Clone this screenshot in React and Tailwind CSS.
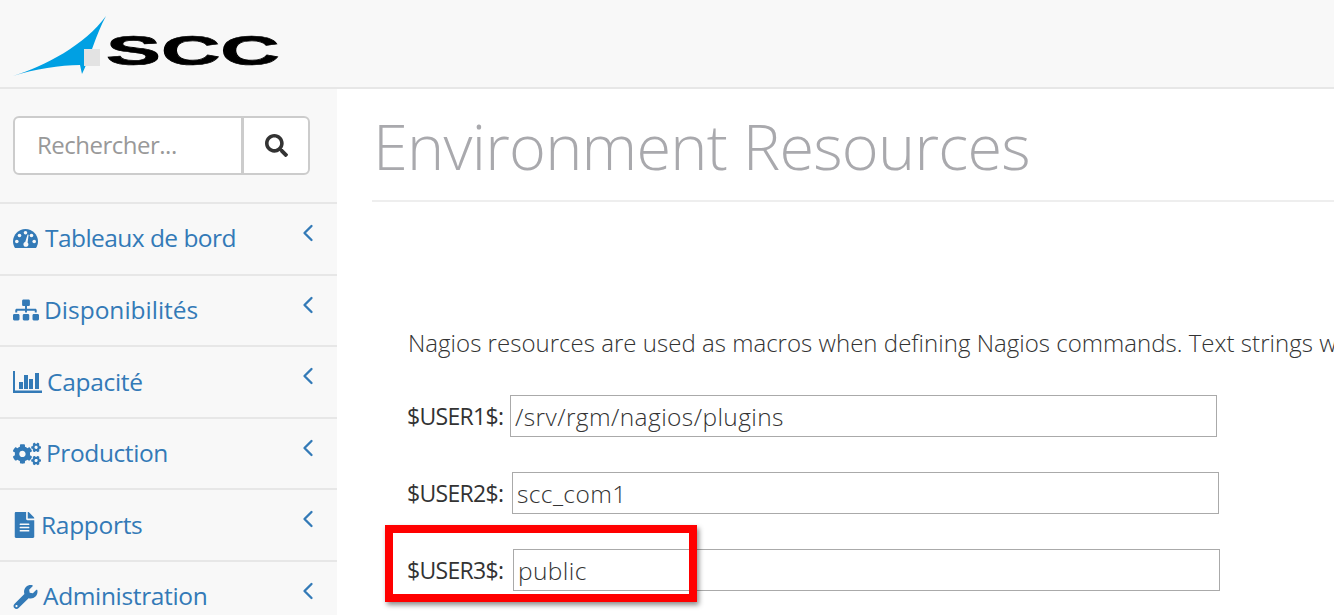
import React from 'react';
import { FaSitemap, FaCogs, FaFileAlt, FaWrench, FaSearch } from 'react-icons/fa';
import { ChevronLeft } from 'lucide-react';

const font = "font-['Open_Sans',sans-serif]";

const DashboardIcon = ({ className }) => (
    <svg viewBox="0 0 25 19" className={className}>
        <path d="M2 19 C0.7 17 0 14.8 0 12.5 C0 5.6 5.6 0 12.5 0 C19.4 0 25 5.6 25 12.5 C25 14.8 24.3 17 23 19 Z" fill="currentColor" />
        <g fill="#f8f8f8">
            <circle cx="3.8" cy="12.5" r="1.8" />
            <circle cx="6.5" cy="6.5" r="1.8" />
            <circle cx="12.5" cy="3.8" r="1.8" />
            <circle cx="18.5" cy="6.5" r="1.8" />
            <circle cx="21.2" cy="12.5" r="1.8" />
            <path d="M12.2 13 L14.6 5.5 L15.6 5.8 L14.6 13.5 C15.8 14.5 15.8 16.6 14.3 17.5 C12.4 18.5 10.3 17.2 10.4 15.2 C10.5 14 11.2 13.2 12.2 13 Z" />
        </g>
    </svg>
);

const BarChartIcon = ({ className }) => (
    <svg viewBox="0 0 29 22" className={className} fill="currentColor">
        <rect x="0" y="0" width="2" height="22" />
        <rect x="0" y="19.5" width="29" height="2.5" />
        <rect x="6" y="11" width="4" height="7" />
        <rect x="11" y="4" width="4" height="14" />
        <rect x="16" y="8" width="4" height="10" />
        <rect x="22" y="2" width="4" height="16" />
    </svg>
);

const menuItems = [
    { label: 'Tableaux de bord', tracking: 'tracking-[-0.55px]', icon: <DashboardIcon className="w-[25px] h-[19px] mr-[2px]" /> },
    { label: 'Disponibilités', tracking: 'tracking-[0px]', icon: <FaSitemap className="w-[26px] h-[26px]" /> },
    { label: 'Capacité', tracking: 'tracking-[-0.3px]', icon: <BarChartIcon className="w-[29px] h-[22px]" /> },
    { label: 'Production', tracking: 'tracking-[-0.4px]', icon: <FaCogs className="w-[28px] h-[24px]" /> },
    { label: 'Rapports', tracking: 'tracking-[-0.3px]', icon: <FaFileAlt className="w-[23px] h-[26px]" /> },
    { label: 'Administration', tracking: 'tracking-[-0.35px]', icon: <FaWrench className="w-[25px] h-[24px]" /> },
];

const resources = [
    { label: '$USER1$:', value: '/srv/rgm/nagios/plugins', width: 'w-[103px]' },
    { label: '$USER2$:', value: 'scc_com1', width: 'w-[105px]' },
    { label: '$USER3$:', value: 'public', width: 'w-[106px]' },
];

const Logo = () => (
    <svg viewBox="0 0 290 87" className="w-[290px] h-[87px]">
        <path d="M13 76 C45 66 85 45 106 16 C96 34 90 58 82 74 L80 65 C60 65 35 69 13 76 Z" fill="#00a0e3" />
        <rect x="84" y="49" width="16" height="17" fill="#e3e3e3" />
        <text transform="translate(106 65) scale(1.96 1)" fontFamily="Liberation Sans, sans-serif" fontWeight="700" fontSize="42" stroke="#000" strokeWidth="0.7" fill="#000">SCC</text>
    </svg>
);

const App = () => (
    <div className={`${font} h-[615px] w-[1334px] overflow-hidden bg-white relative`}>
        {/* Header */}
        <div className="h-[89px] bg-[#f8f8f8] border-b-2 border-[#e7e7e7]">
            <Logo />
        </div>

        <div className="flex">
            {/* Sidebar */}
            <div className="w-[337px] h-[526px] shrink-0 bg-[#f8f8f8]">
                <div className="h-[113px] px-[13px] pt-[27px]">
                    <div className="flex h-[59px] w-[297px] bg-white border-2 border-[#ccc] rounded-[6px]">
                        <div className="flex-1 pl-[22px] pb-[2px] flex items-center text-[24px] tracking-[-0.5px] text-[#999] border-r-[3px] border-[#ccc]">Rechercher...</div>
                        <div className="w-[64px] flex items-center justify-center text-[#333]">
                            <FaSearch className="w-[23px] h-[23px]" />
                        </div>
                    </div>
                </div>
                {menuItems.map((item) => (
                    <div key={item.label} className="h-[71.6px] border-t-2 border-[#e7e7e7] flex items-start pl-[13px] pr-[15px] text-[#337ab7]">
                        <div className={`flex items-center gap-[5px] h-[69.5px] flex-1 text-[24.5px] ${item.tracking}`}>
                            {item.icon}
                            <span>{item.label}</span>
                        </div>
                        <ChevronLeft size={28} strokeWidth={2} className="mt-[15px]" />
                    </div>
                ))}
            </div>

            {/* Page content */}
            <div className="flex-1 pl-[35px] pt-[16px] min-w-0 overflow-hidden">
                <h1 className="text-[63px] tracking-[-0.75px] leading-[82px] font-light text-[#a9a9ad] pl-[1px] pb-[13px] border-b-2 border-[#eee] whitespace-nowrap">Environment Resources</h1>
                <p className="mt-[124px] pl-[36px] text-[24px] tracking-[0.03px] leading-[34px] font-light text-[#333] whitespace-nowrap">Nagios resources are used as macros when defining Nagios commands. Text strings will be substituted</p>
                <div className="mt-[35px] pl-[35px] flex flex-col gap-[35px]">
                    {resources.map((row) => (
                        <div key={row.label} className="flex items-center h-[42px]">
                            <span className={`${row.width} text-[23px] tracking-[-0.7px] font-medium text-[#333]`}>{row.label}</span>
                            <input readOnly value={row.value} className="w-[707px] h-[42px] border-[1.5px] border-[#aaa] px-[4px] text-[24.5px] tracking-[0.4px] font-light text-[#333] outline-none" />
                        </div>
                    ))}
                </div>
            </div>
        </div>

        {/* Highlight box drawn over the screenshot */}
        <div className="absolute left-[385px] top-[525px] w-[312px] h-[77px] border-[8px] border-[#f00] shadow-[2px_3px_5px_rgba(0,0,0,0.45)]" />
    </div>
);

export default App;
